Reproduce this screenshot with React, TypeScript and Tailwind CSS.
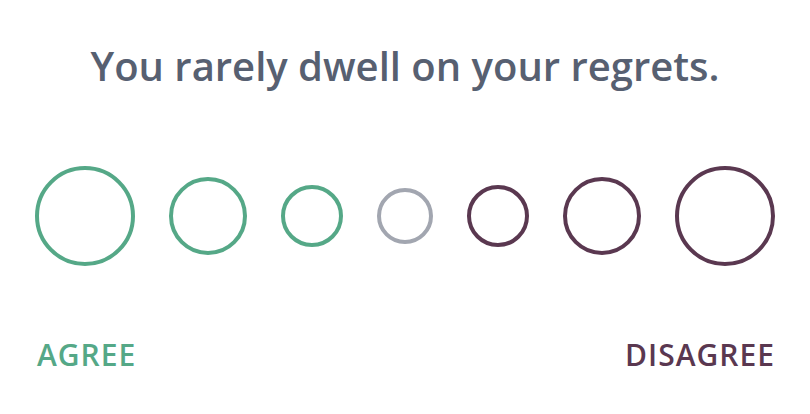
const options = [
  { size: 'w-[100px] h-[100px]', color: 'border-[#55a887]' },
  { size: 'w-[78px] h-[78px]', color: 'border-[#55a887]' },
  { size: 'w-[62px] h-[62px]', color: 'border-[#55a887]' },
  { size: 'w-[56px] h-[56px]', color: 'border-[#a2a6b0]' },
  { size: 'w-[62px] h-[62px]', color: 'border-[#5a3850]' },
  { size: 'w-[78px] h-[78px]', color: 'border-[#5a3850]' },
  { size: 'w-[100px] h-[100px]', color: 'border-[#5a3850]' },
];

export default function App() {
  return (
    <div className="w-[810px] h-[414px] bg-white px-[35px] pt-[42px] font-['Open_Sans',sans-serif] font-semibold">
      {/* Question */}
      <h1 className="text-center text-[40px] leading-[48px] text-[#576071]">
        You rarely dwell on your regrets.
      </h1>

      {/* Scale */}
      <div className="mt-[76px] h-[100px] flex items-center justify-between">
        {options.map((o, i) => (
          <button
            key={i}
            className={`${o.size} ${o.color} rounded-full border-[4px] bg-white shrink-0`}
          />
        ))}
      </div>

      {/* Labels */}
      <div className="mt-[71px] flex justify-between text-[30px] leading-[36px] tracking-[1px]">
        <span className="text-[#55a887] ml-[2px]">AGREE</span>
        <span className="text-[#5a3850]">DISAGREE</span>
      </div>
    </div>
  );
}
